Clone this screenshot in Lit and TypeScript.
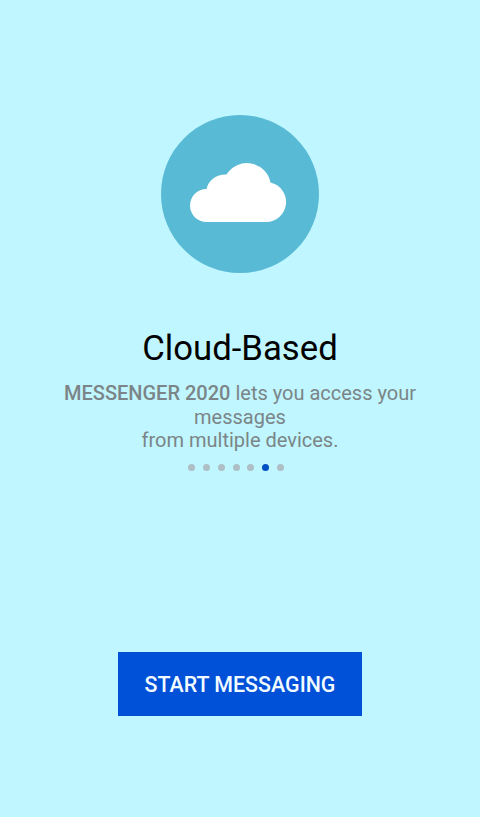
import { html, css, LitElement } from 'lit';
import { customElement, property } from 'lit/decorators.js';
import { classMap } from 'lit/directives/class-map.js';

@customElement('page-dots')
class PageDots extends LitElement {
  @property({ type: Number }) count = 0;
  @property({ type: Number }) current = 0;

  static styles = css`
    :host {
      display: flex;
      gap: 7.7px;
    }

    .dot {
      width: 7px;
      height: 7px;
      border-radius: 50%;
      background-color: #adbfc4;
    }

    .selected {
      background-color: #0050c4;
    }
  `;

  render() {
    return html`
      ${Array.from({ length: this.count }, (_, i) => html`
        <span class=${classMap({ dot: true, selected: i === this.current })}></span>
      `)}
    `;
  }
}

@customElement('app-root')
class AppRoot extends LitElement {
  @property({ type: Number }) currentPage = 5;

  static styles = css`
    :host {
      display: flex;
      flex-direction: column;
      align-items: center;
      box-sizing: border-box;
      height: 100vh;
      padding-top: 115px;
      background-color: #c0f6ff;
      font-family: Roboto, sans-serif;
      text-align: center;
    }

    .logo {
      display: block;
      width: 158px;
      height: 158px;
    }

    h1 {
      margin: 55px 0 0;
      font-size: 34.7px;
      font-weight: 400;
      line-height: 41px;
      color: #000;
    }

    p {
      width: 380px;
      margin: 13px 0 0;
      font-size: 20px;
      line-height: 23.5px;
      color: #7b8587;
    }

    b {
      font-weight: 500;
    }

    page-dots {
      margin: 11px 8px 0 0;
    }

    button {
      width: 244px;
      height: 64px;
      margin-top: 181px;
      padding: 1px 0 0;
      border: 0;
      background-color: #0050d8;
      color: #f2fbff;
      font-family: inherit;
      font-size: 21.4px;
      font-weight: 500;
      cursor: pointer;
    }
  `;

  render() {
    return html`
      <svg class="logo" viewBox="0 0 158 158">
        <circle cx="79" cy="79" r="79" fill="#58bad4" />
        <path
          fill="#fff"
          d="M45.500 107a16.500 16.500 0 0 1 0-33A19 19 0 0 1 65.500 59.500A24 24 0 0 1 109.500 67.500A20 20 0 0 1 105 107z"
        />
      </svg>
      <h1>Cloud-Based</h1>
      <p>
        <b>MESSENGER 2020</b> lets you access your<br />
        messages<br />
        from multiple devices.
      </p>
      <page-dots .count=${7} .current=${this.currentPage}></page-dots>
      <button>START MESSAGING</button>
    `;
  }
}
